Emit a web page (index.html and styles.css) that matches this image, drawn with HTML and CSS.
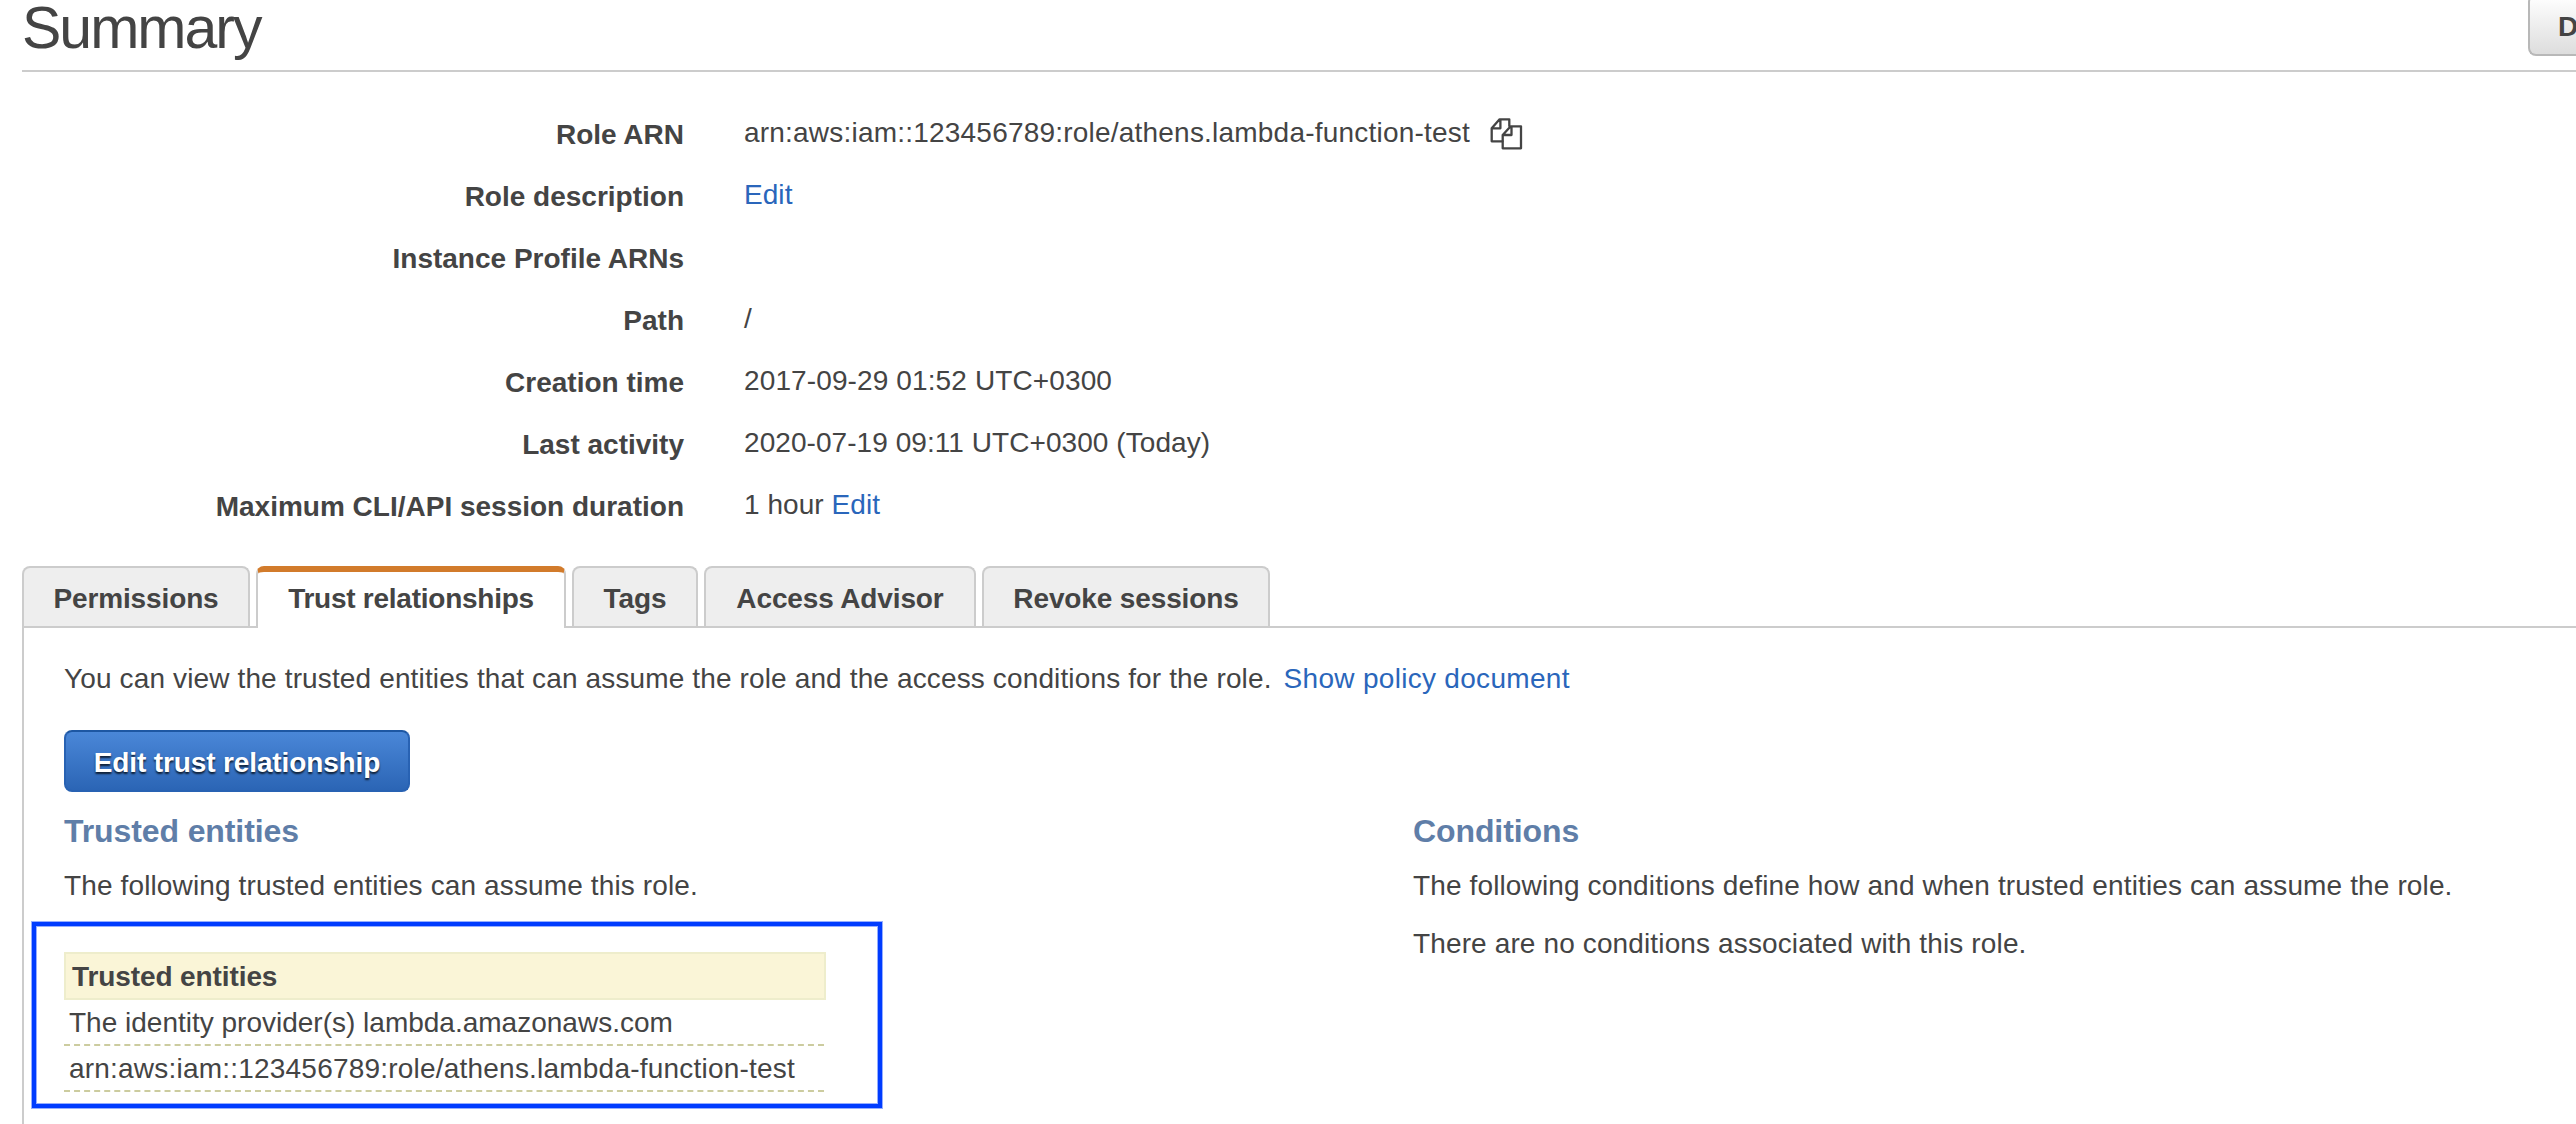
FILE: index.html
```html
<!DOCTYPE html>
<html lang="en">
<head>
<meta charset="utf-8">
<title>Role summary</title>
<link rel="stylesheet" href="styles.css">
</head>
<body>
<main class="page">
  <header class="page-header">
    <h1 class="page-title">Summary</h1>
    <button class="btn btn-default" type="button">D</button>
  </header>

  <dl class="details">
    <dt>Role ARN</dt>
    <dd><span class="arn">arn:aws:iam::123456789:role/athens.lambda-function-test</span><svg class="copy-icon" viewBox="0 0 34 34" width="34" height="34" fill="none" stroke="#444" stroke-width="2.3" stroke-linejoin="round" stroke-linecap="round"><path d="M19.3 9V2.3H9.6L1.7 11.3V24.3H12.5M10.4 2.6V11.3H2"/><path d="M20.7 9.3H31V31.3H12.7V18ZM21.5 9.6V18H13"/></svg></dd>
    <dt>Role description</dt>
    <dd><a class="link">Edit</a></dd>
    <dt>Instance Profile ARNs</dt>
    <dd></dd>
    <dt>Path</dt>
    <dd>/</dd>
    <dt>Creation time</dt>
    <dd class="created">2017-09-29 01:52 UTC+0300</dd>
    <dt>Last activity</dt>
    <dd>2020-07-19 09:11 UTC+0300 (Today)</dd>
    <dt>Maximum CLI/API session duration</dt>
    <dd>1 hour <a class="link">Edit</a></dd>
  </dl>

  <nav class="tabs">
    <a class="tab tab-permissions">Permissions</a>
    <a class="tab tab-trust active">Trust relationships</a>
    <a class="tab tab-tags">Tags</a>
    <a class="tab tab-advisor">Access Advisor</a>
    <a class="tab tab-revoke">Revoke sessions</a>
  </nav>

  <section class="panel">
    <p class="intro"><span>You can view the trusted entities that can assume the role and the access conditions for the role.</span><a class="link">Show policy document</a></p>
    <button class="btn btn-primary" type="button">Edit trust relationship</button>
    <div class="columns">
      <section class="column">
        <h2>Trusted entities</h2>
        <p>The following trusted entities can assume this role.</p>
        <div class="highlight">
          <div class="entities">
            <div class="entities-head">Trusted entities</div>
            <div class="entities-row">The identity provider(s) lambda.amazonaws.com</div>
            <div class="entities-row arn">arn:aws:iam::123456789:role/athens.lambda-function-test</div>
          </div>
        </div>
      </section>
      <section class="column">
        <h2>Conditions</h2>
        <p>The following conditions define how and when trusted entities can assume the role.</p>
        <p>There are no conditions associated with this role.</p>
      </section>
    </div>
  </section>
</main>
</body>
</html>
```
FILE: styles.css
```css
* { box-sizing: border-box; }

body {
  margin: 0;
  height: 1124px;
  overflow: hidden;
  background: #fff;
  color: #444;
  font: 28px/58px "Liberation Sans", Arial, sans-serif;
}

h1, h2, p, dl, dd { margin: 0; }

.link { color: #2a66bb; }

.page {
  display: flex;
  flex-direction: column;
  height: 1124px;
  padding-left: 22px;
}

.page-header {
  display: flex;
  justify-content: space-between;
  align-items: flex-start;
  height: 72px;
  border-bottom: 2px solid #ccc;
}

.page-title {
  font-size: 59px;
  font-weight: 400;
  line-height: 56px;
  letter-spacing: -2px;
}

.btn {
  display: block;
  border-radius: 8px;
  font: bold 28px/58px "Liberation Sans", Arial, sans-serif;
  white-space: nowrap;
}

.btn-default {
  width: 48px;
  height: 62px;
  margin-top: -6px;
  padding: 2px 0 0 28px;
  overflow: hidden;
  border: 2px solid #b8b8b8;
  border-right: 0;
  border-radius: 8px 0 0 8px;
  background: linear-gradient(#fff, #ddd);
  color: #444;
  text-align: left;
}

.btn-primary {
  width: 346px;
  height: 62px;
  padding: 2px 0 0;
  border: 2px solid #2862b3;
  border-top-color: #1d57a3;
  background: linear-gradient(#4a87d8, #2b65b5);
  color: #fff;
  letter-spacing: -0.13px;
  text-shadow: 0 2px 2px rgba(0, 0, 0, 0.75);
}

.details {
  display: grid;
  grid-template-columns: 662px auto;
  grid-auto-rows: 62px;
  column-gap: 60px;
  padding-top: 32px;
  line-height: 62px;
}

.details dt {
  font-weight: bold;
  text-align: right;
}

.details dd {
  display: flex;
  height: 58px;
  line-height: 58px;
  letter-spacing: 0.06px;
  white-space: pre;
}

.details .created { letter-spacing: 0.12px; }

.arn { letter-spacing: 0.21px; }

.copy-icon { margin: 13px 0 0 20px; }

.tabs {
  display: flex;
  gap: 6px;
  height: 60px;
  margin-top: 28px;
}

.tab {
  height: 60px;
  border: 2px solid #ccc;
  border-bottom: 0;
  border-radius: 8px 8px 0 0;
  background: #eee;
  font-weight: bold;
  line-height: 62px;
  letter-spacing: -0.13px;
  text-align: center;
  white-space: nowrap;
}

.tab.active {
  height: 62px;
  border-top: 6px solid #d27b2b;
  background: #fff;
  line-height: 54px;
  letter-spacing: -0.25px;
  z-index: 1;
}

.tab-permissions { width: 228px; }
.tab-trust { width: 310px; }
.tab-tags { width: 126px; }
.tab-advisor { width: 272px; }
.tab-revoke { width: 288px; }

.panel {
  flex: 1;
  padding: 22px 0 0 40px;
  border-top: 2px solid #ccc;
  border-left: 2px solid #ccc;
}

.intro {
  display: flex;
  gap: 12px;
  height: 80px;
  letter-spacing: 0.135px;
}

.intro .link { letter-spacing: 0.3px; }

.columns {
  display: grid;
  grid-template-columns: 1349px auto;
}

.column h2 {
  height: 65px;
  padding-top: 10px;
  color: #5f7ea8;
  font-size: 32px;
  line-height: 58px;
  letter-spacing: -0.1px;
}

.column p {
  line-height: 58px;
  letter-spacing: 0.13px;
}

.highlight {
  width: 850px;
  height: 186px;
  margin: 7px 0 0 -32px;
  padding: 26px 0 0 28px;
  border: 4px solid #003cff;
  box-shadow: 0 0 0 1px #96aeff, inset 0 0 0 1px #96aeff;
}

.entities { width: 762px; }

.entities-head {
  height: 48px;
  padding-left: 6px;
  border: 2px solid #eeedcc;
  background: #faf5d7;
  font-weight: bold;
  line-height: 46px;
  letter-spacing: -0.1px;
}

.entities-row {
  width: 760px;
  height: 46px;
  padding-left: 5px;
  border-bottom: 2px dashed #cccc9f;
  line-height: 46px;
}
```
